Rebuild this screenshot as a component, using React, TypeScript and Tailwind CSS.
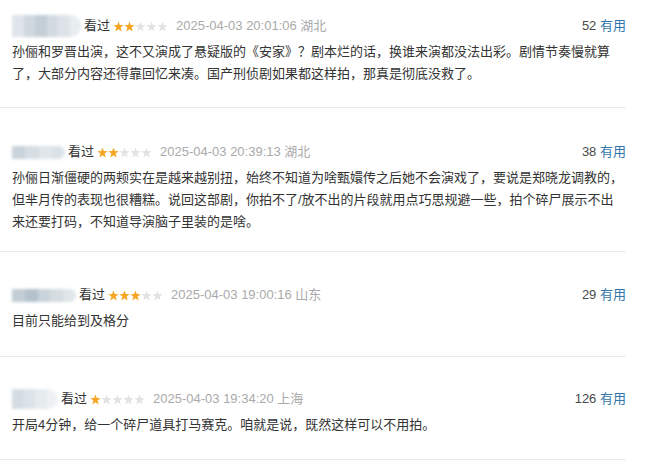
const reviews = [
  {
    blur: { w: "w-[69px]", h: "h-[22px]", cells: ["#dfe5ea", "#cfd8df", "#c4ced6", "#d3dbe1", "#dde3e8", "#e8edf0"] },
    stars: 2,
    time: "2025-04-03 20:01:06",
    loc: "湖北",
    votes: 52,
    text: "孙俪和罗晋出演，这不又演成了悬疑版的《安家》？剧本烂的话，换谁来演都没法出彩。剧情节奏慢就算了，大部分内容还得靠回忆来凑。国产刑侦剧如果都这样拍，那真是彻底没救了。",
    pt: "pt-[15px]",
    pb: "pb-[22px]",
  },
  {
    blur: { w: "w-[53px]", h: "h-[13px]", cells: ["#c9d3db", "#d6dee4", "#e0e6ea", "#dbe2e7"] },
    stars: 2,
    time: "2025-04-03 20:39:13",
    loc: "湖北",
    votes: 38,
    text: "孙俪日渐僵硬的两颊实在是越来越别扭，始终不知道为啥甄嬛传之后她不会演戏了，要说是郑晓龙调教的，但芈月传的表现也很糟糕。说回这部剧，你拍不了/放不出的片段就用点巧思规避一些，拍个碎尸展示不出来还要打码，不知道导演脑子里装的是啥。",
    pt: "pt-[33px]",
    pb: "pb-[18px]",
  },
  {
    blur: { w: "w-[64px]", h: "h-[13px]", cells: ["#c3ced6", "#b3c2cc", "#c9d3da", "#d5dde2", "#dfe5e9"] },
    stars: 3,
    time: "2025-04-03 19:00:16",
    loc: "山东",
    votes: 29,
    text: "目前只能给到及格分",
    pt: "pt-[32px]",
    pb: "pb-[24px]",
  },
  {
    blur: { w: "w-[46px]", h: "h-[20px]", cells: ["#d5dde3", "#dde4e9", "#e6ebee", "#eef1f3"] },
    stars: 1,
    time: "2025-04-03 19:34:20",
    loc: "上海",
    votes: 126,
    text: "开局4分钟，给一个碎尸道具打马赛克。咱就是说，既然这样可以不用拍。",
    pt: "pt-[31px]",
    pb: "pb-[23px]",
  },
];

const Star = ({ on }: { on: boolean }) => (
  <svg width="11" height="11" viewBox="0 0 10 10">
    <polygon
      points="5,0.4 6.2,3.7 9.7,3.8 6.9,6 7.9,9.5 5,7.5 2.1,9.5 3.1,6 0.3,3.8 3.8,3.7"
      fill={on ? "#f5a623" : "#e3e3e3"}
    />
  </svg>
);

const App = () => {
  return (
    <div className="w-[667px] h-[461px] overflow-hidden bg-white font-['Liberation_Sans','Noto_Sans_CJK_SC',sans-serif] text-[13px]">
      <div className="w-[626px]">
        {reviews.map((r, i) => (
          <div key={i} className={`border-b border-[#eaeaea] pl-3 ${r.pt} ${r.pb}`}>
            <div className="flex items-center h-[22px]">
              <span className={`flex ${r.blur.w} ${r.blur.h} blur-[1.5px] rounded-r-full overflow-hidden`}>
                {r.blur.cells.map((c, j) => (
                  <span key={j} className="flex-1 h-full" style={{ background: c }} />
                ))}
              </span>
              <span className="ml-[3px] text-[#333]">看过</span>
              <span className="ml-[3px] flex">
                {[0, 1, 2, 3, 4].map((s) => (
                  <Star key={s} on={s < r.stars} />
                ))}
              </span>
              <span className="ml-[8px] text-[#aaa]">
                {r.time} {r.loc}
              </span>
              <span className="ml-auto text-[#494949]">
                {r.votes} <span className="text-[#3377aa]">有用</span>
              </span>
            </div>
            <p className="mt-[4px] leading-[22px] text-[#333]">{r.text}</p>
          </div>
        ))}
      </div>
    </div>
  );
};

export default App;
